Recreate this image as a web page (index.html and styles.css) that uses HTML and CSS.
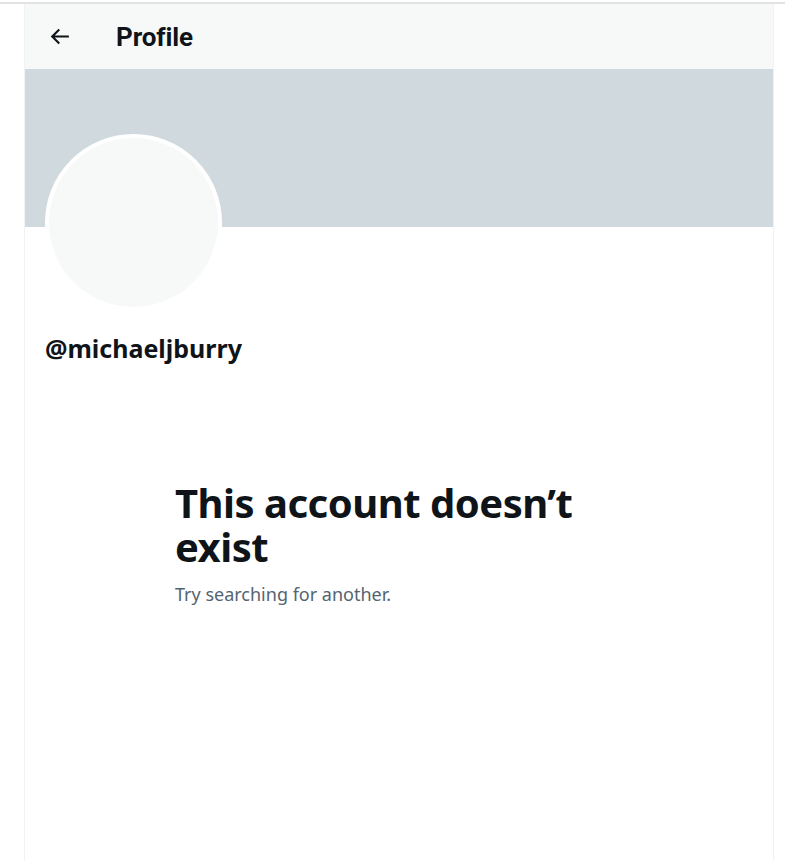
FILE: index.html
```html
<!DOCTYPE html>
<html lang="en">
<head>
    <meta charset="UTF-8">
    <meta name="viewport" content="width=device-width, initial-scale=1.0">
    <title>Profile</title>
    <link rel="stylesheet" href="styles.css">
</head>
<body>
    <div class="top-line"></div>

    <div class="column">
        <header class="header">
            <button class="back-btn" aria-label="Back">
                <svg viewBox="0 0 24 24" width="25" height="25">
                    <path d="M7.414 13l5.043 5.04-1.414 1.42L3.586 12l7.457-7.46 1.414 1.42L7.414 11H21v2H7.414z"></path>
                </svg>
            </button>
            <h2 class="title">Profile</h2>
        </header>

        <div class="banner"></div>

        <div class="profile">
            <div class="avatar"></div>
            <div class="username">@michaeljburry</div>
        </div>

        <div class="empty-state">
            <div class="empty-box">
                <h1>This account doesn’t exist</h1>
                <p>Try searching for another.</p>
            </div>
        </div>
    </div>
</body>
</html>
```

FILE: styles.css
```css
* {
    margin: 0;
    padding: 0;
    box-sizing: border-box;
}

body {
    font-family: "Noto Sans", "DejaVu Sans", sans-serif;
    background-color: #fff;
    color: #0f1419;
    padding-top: 2px;
    overflow: hidden;
}

.top-line {
    height: 2px;
    width: 785px;
    background-color: #e3e3e3;
}

.column {
    margin-left: 24px;
    width: 750px;
    min-height: 857px;
    border-left: 1px solid #eff3f4;
    border-right: 1px solid #eff3f4;
    display: flex;
    flex-direction: column;
}

.header {
    height: 65px;
    background-color: #f7f9f9;
    display: flex;
    align-items: center;
    padding-left: 20px;
}

.back-btn {
    width: 28px;
    height: 28px;
    border: none;
    background: none;
    display: flex;
    align-items: center;
    justify-content: center;
    margin-right: 43px;
}

.back-btn svg {
    fill: #0f1419;
}

.title {
    font-family: Roboto, "Noto Sans", sans-serif;
    font-size: 26px;
    font-weight: 700;
    letter-spacing: -0.1px;
}

.banner {
    height: 158px;
    background-color: #cfd9de;
}

.profile {
    padding: 0 20px;
}

.avatar {
    width: 177px;
    height: 177px;
    margin-top: -93px;
    border-radius: 50%;
    border: 4px solid #fff;
    background-color: #f7f9f9;
}

.username {
    margin-top: 21px;
    font-size: 25px;
    font-weight: 700;
    line-height: 32px;
}

.empty-state {
    display: flex;
    justify-content: center;
    padding-top: 117px;
}

.empty-box {
    width: 448px;
}

.empty-box h1 {
    font-size: 40px;
    font-weight: 700;
    line-height: 44px;
    letter-spacing: -0.5px;
}

.empty-box p {
    margin-top: 12px;
    font-size: 18px;
    line-height: 26px;
    color: #536471;
}
```
